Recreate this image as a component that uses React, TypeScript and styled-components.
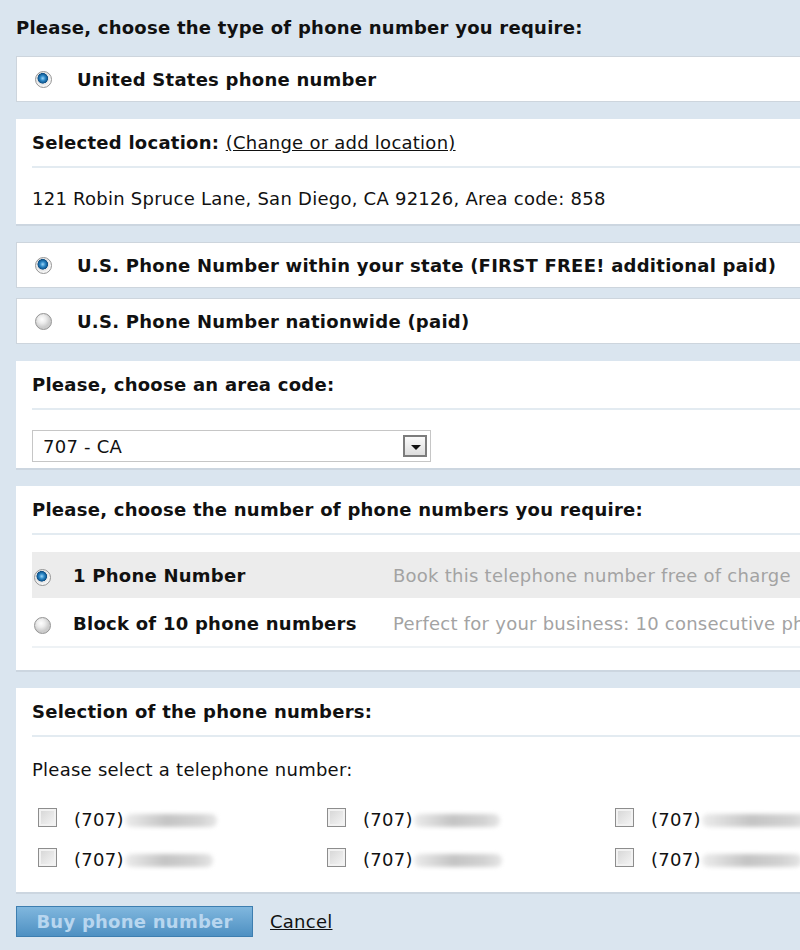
import styled, { createGlobalStyle } from "styled-components";

const GlobalStyle = createGlobalStyle`
  html, body {
    margin: 0;
    padding: 0;
    background: #dae5ef;
  }
  body {
    font-family: "DejaVu Sans", Verdana, sans-serif;
    font-size: 18px;
    letter-spacing: 0.25px;
    color: #111;
  }
`;

const numberOptions = [
  {
    label: "1 Phone Number",
    hint: "Book this telephone number free of charge",
    checked: true,
  },
  {
    label: "Block of 10 phone numbers",
    hint: "Perfect for your business: 10 consecutive phone numbers",
    checked: false,
  },
];

const phoneNumbers = [
  [92, 86, 110],
  [88, 88, 100],
];

const App = () => {
  return (
    <Page>
      <GlobalStyle />
      <Heading>Please, choose the type of phone number you require:</Heading>

      <OptionBox $gap={17}>
        <OptionLabel>
          <Radio $checked />
          <span>United States phone number</span>
        </OptionLabel>
      </OptionBox>

      <Panel $pad={14}>
        <PanelTitle>
          Selected location: <TextLink>(Change or add location)</TextLink>
        </PanelTitle>
        <Divider />
        <BodyText>
          121 Robin Spruce Lane, San Diego, CA 92126, Area code: 858
        </BodyText>
      </Panel>

      <OptionBox $gap={10}>
        <OptionLabel>
          <Radio $checked />
          <span>U.S. Phone Number within your state (FIRST FREE! additional paid)</span>
        </OptionLabel>
      </OptionBox>
      <OptionBox $gap={17}>
        <OptionLabel>
          <Radio />
          <span>U.S. Phone Number nationwide (paid)</span>
        </OptionLabel>
      </OptionBox>

      <Panel $pad={6}>
        <PanelTitle>Please, choose an area code:</PanelTitle>
        <Divider />
        <SelectBox>
          <span>707 - CA</span>
          <SelectArrow />
        </SelectBox>
      </Panel>

      <Panel $pad={22}>
        <PanelTitle>Please, choose the number of phone numbers you require:</PanelTitle>
        <Divider $mb={17} />
        {numberOptions.map((opt) => (
          <CountRow key={opt.label} $active={opt.checked}>
            <Radio $checked={opt.checked} $nudge />
            <CountLabel>{opt.label}</CountLabel>
            <CountHint>{opt.hint}</CountHint>
          </CountRow>
        ))}
      </Panel>

      <Panel $pad={15}>
        <PanelTitle>Selection of the phone numbers:</PanelTitle>
        <Divider $mb={22} />
        <BodyText>Please select a telephone number:</BodyText>
        <NumberGrid>
          {phoneNumbers.map((row, r) =>
            row.map((w, c) => (
              <NumberItem key={`${r}-${c}`}>
                <CheckBox />
                <span>(707)</span>
                <Blurred style={{ width: w }} />
              </NumberItem>
            ))
          )}
        </NumberGrid>
      </Panel>

      <Actions>
        <BuyButton>Buy phone number</BuyButton>
        <TextLink>Cancel</TextLink>
      </Actions>
    </Page>
  );
};

const Page = styled.div`
  width: 800px;
  height: 950px;
  overflow: hidden;
  padding: 16px 0 0 16px;
  box-sizing: border-box;
  display: flex;
  flex-direction: column;
`;

const Heading = styled.h1`
  margin: 0 0 16px 0;
  font-size: 18px;
  font-weight: bold;
  line-height: 24px;
  white-space: nowrap;
`;

const OptionBox = styled.div<{ $gap: number }>`
  width: 820px;
  height: 46px;
  background: #fff;
  border: 1px solid #cdd5dd;
  box-sizing: border-box;
  display: flex;
  align-items: center;
  padding-left: 18px;
  margin-bottom: ${(p) => p.$gap}px;
`;

const OptionLabel = styled.label`
  display: flex;
  align-items: center;
  gap: 25px;
  font-weight: bold;
  white-space: nowrap;
`;

const Radio = styled.span<{ $checked?: boolean; $nudge?: boolean }>`
  width: 17px;
  height: 17px;
  border-radius: 50%;
  box-sizing: border-box;
  flex-shrink: 0;
  border: 1px solid #949494;
  margin-top: ${(p) => (p.$nudge ? 4 : 0)}px;
  background: ${(p) =>
    p.$checked
      ? "radial-gradient(circle at 45% 42%, #9dd6f7 0, #2d89c8 2.5px, #0c4f86 5px, #e2e2e2 5.5px, #f7f7f7 8px)"
      : "radial-gradient(circle at 40% 35%, #ffffff 0, #ececec 4px, #cccccc 8px)"};
`;

const Panel = styled.section<{ $pad?: number }>`
  width: 820px;
  background: #fff;
  border-bottom: 2px solid #ccd6e0;
  box-sizing: border-box;
  padding: 13px 0 ${(p) => p.$pad ?? 10}px 16px;
  margin-bottom: 16px;
`;

const PanelTitle = styled.h2`
  margin: 0;
  font-size: 18px;
  font-weight: bold;
  line-height: 22px;
  white-space: nowrap;
`;

const Divider = styled.hr<{ $mb?: number }>`
  border: 0;
  border-top: 2px solid #e3ebf1;
  margin: 12px 0 ${(p) => p.$mb ?? 20}px 0;
`;

const BodyText = styled.p`
  margin: 0;
  line-height: 22px;
  white-space: nowrap;
`;

const TextLink = styled.a`
  font-weight: normal;
  color: #111;
  text-decoration: underline;
  cursor: pointer;
`;

const SelectBox = styled.div`
  width: 399px;
  height: 32px;
  border: 1px solid #c6c6c6;
  box-sizing: border-box;
  display: flex;
  align-items: center;
  justify-content: space-between;
  padding: 0 3px 0 10px;
`;

const SelectArrow = styled.span`
  width: 24px;
  height: 22px;
  box-sizing: border-box;
  border: 2px solid #7c7c7c;
  background: linear-gradient(#fafafa, #dedede);
  position: relative;
  &::after {
    content: "";
    position: absolute;
    left: 6px;
    top: 8px;
    border-left: 5px solid transparent;
    border-right: 5px solid transparent;
    border-top: 5px solid #111;
  }
`;

const CountRow = styled.div<{ $active: boolean }>`
  height: 46px;
  display: flex;
  align-items: center;
  padding-left: 2px;
  background: ${(p) => (p.$active ? "#ececec" : "#fff")};
  border-bottom: ${(p) => (p.$active ? "none" : "2px solid #eef2f5")};
  margin-top: ${(p) => (p.$active ? 0 : 2)}px;
  white-space: nowrap;
`;

const CountLabel = styled.span`
  display: inline-block;
  flex-shrink: 0;
  width: 342px;
  box-sizing: border-box;
  padding-left: 22px;
  font-weight: bold;
`;

const CountHint = styled.span`
  color: #a3a3a3;
`;

const NumberGrid = styled.div`
  display: grid;
  grid-template-columns: 289px 288px 289px;
  row-gap: 18px;
  margin-top: 28px;
  padding-left: 6px;
  padding-bottom: 6px;
`;

const NumberItem = styled.div`
  display: flex;
  align-items: center;
  gap: 17px;
  line-height: 22px;
  white-space: nowrap;
`;

const CheckBox = styled.span`
  width: 19px;
  height: 19px;
  box-sizing: border-box;
  border: 1px solid #8d8d8d;
  background: linear-gradient(135deg, #d4d4d4, #f7f7f7);
  box-shadow: inset 0 0 0 2px #f2f2f2;
  margin-top: -6px;
`;

const Blurred = styled.span`
  height: 13px;
  margin-left: -16px;
  border-radius: 6px;
  background: linear-gradient(90deg, #ececec, #c4c4c4 45%, #d2d2d2 80%, #e6e6e6);
  filter: blur(2px);
`;

const Actions = styled.div`
  display: flex;
  align-items: center;
  gap: 17px;
  margin-top: -4px;
`;

const BuyButton = styled.button`
  width: 237px;
  height: 31px;
  border: 1px solid #3d7eb0;
  background: linear-gradient(#80b7de, #4e90c2);
  color: #b8d6ef;
  font-family: "DejaVu Sans", Verdana, sans-serif;
  font-size: 18px;
  letter-spacing: 0.25px;
  font-weight: bold;
  cursor: pointer;
`;

export default App;
